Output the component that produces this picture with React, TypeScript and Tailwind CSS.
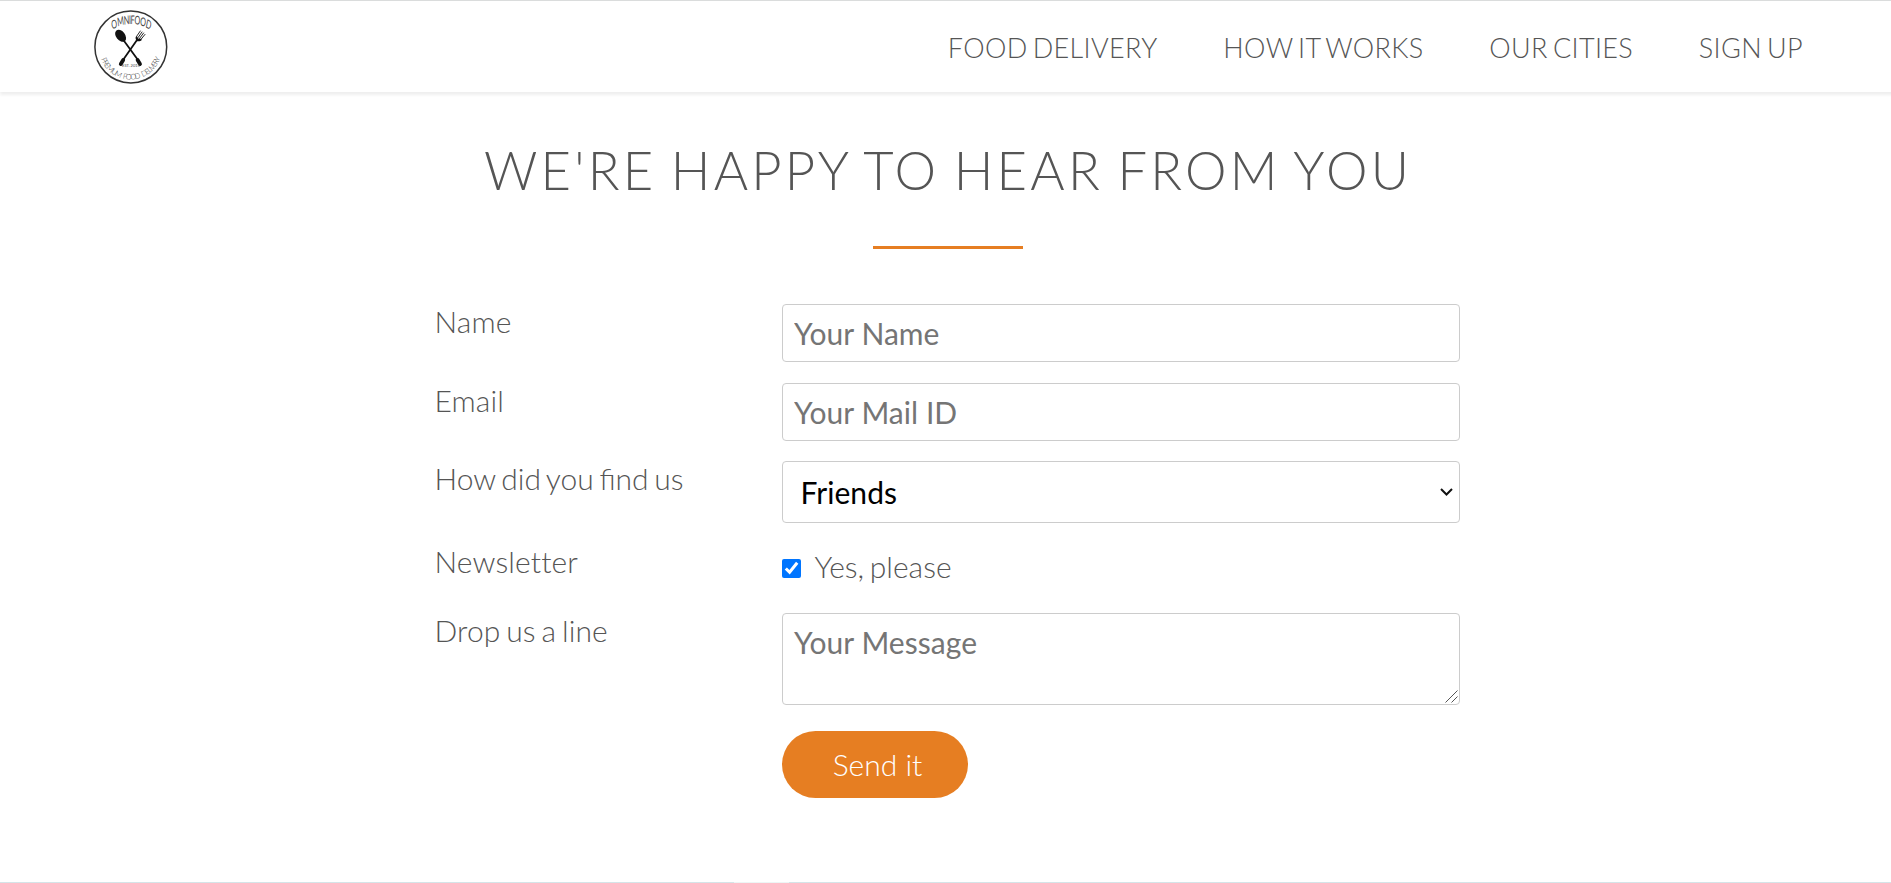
import React from "react";

const field =
  "block w-full rounded-[4px] border border-[#ccc] bg-white p-[10.5px] pl-[11.5px] text-[30px] leading-[36px] font-normal tracking-[0.05px] [word-spacing:0px] placeholder:text-[#757575] outline-none";

function Logo() {
  return (
    <svg viewBox="0 0 74 74" className="size-[74px] shrink-0" aria-hidden="true">
      <defs>
        <path id="arc-top" d="M 14 38 A 48 24 0 0 1 110 38" />
        <path id="arc-bottom" d="M 5 38 A 31.5 31.5 0 0 0 68 38" />
      </defs>
      <circle cx="36.8" cy="37" r="35.9" fill="#fff" stroke="#333" strokeWidth="1.5" />
      <g stroke="#111" strokeLinecap="round" fill="none">
        <path d="M29 29.5 L44 50" strokeWidth="1.8" />
        <path d="M43.6 50 L46 54" strokeWidth="3.8" />
        <path d="M43 30 L29 50" strokeWidth="1.8" />
        <path d="M29.2 50 L26.8 54" strokeWidth="3.8" />
        <path d="M42.5 26.5 L46.3 21 M44 27.6 L48 22 M45.4 28.6 L49.6 23 M46.6 29.8 L51 24.4" strokeWidth="0.9" />
        <path d="M42.6 27.5 Q42 31.5 46.6 29.8" strokeWidth="2" fill="#111" />
      </g>
      <ellipse cx="26.6" cy="25.8" rx="4.5" ry="6.8" transform="rotate(-38 26.6 25.8)" fill="#111" />
      <g fill="#444" fontFamily="Lato, sans-serif" fontWeight="400">
        <text transform="scale(0.6 1)" fontSize="12" letterSpacing="-0.6" textAnchor="middle">
          <textPath href="#arc-top" startOffset="50%">OMNIFOOD</textPath>
        </text>
        <text fontSize="7.6" letterSpacing="-1.1" wordSpacing="2" textAnchor="middle" fontWeight="300">
          <textPath href="#arc-bottom" startOffset="50%">PREMIUM FOOD DELIVERY</textPath>
        </text>
        <text x="37" y="56.5" fontSize="4" wordSpacing="0" textAnchor="middle">EST. 2015</text>
      </g>
    </svg>
  );
}

type RowProps = { label: string; className: string; labelClass?: string; children?: React.ReactNode };

function Row({ label, className, labelClass = "tracking-[0.12px]", children }: RowProps) {
  return (
    <div className={`grid grid-cols-[331px_678px] gap-x-[16px] ${className}`}>
      <label className={`-mt-px leading-[37px] ${labelClass}`}>{label}</label>
      <div>{children}</div>
    </div>
  );
}

export default function App() {
  return (
    <div className="h-[883px] w-full overflow-hidden bg-white font-['Lato',sans-serif] text-[30px] font-light text-[#555] [word-spacing:-2.5px]">
      <div className="flex h-full w-[1896px] flex-col">
        <header className="flex h-[92px] w-full shrink-0 items-center justify-between border-t border-[#dadcdc] pt-[1px] pr-[93px] pl-[93.5px] shadow-[0_3px_3px_#efefef]">
          <Logo />
          <nav className="flex gap-[65.7px] pt-[3px] text-[27px] tracking-[0.35px]">
            <a>FOOD DELIVERY</a>
            <a>HOW IT WORKS</a>
            <a>OUR CITIES</a>
            <a>SIGN UP</a>
          </nav>
        </header>
        <main className="flex flex-col items-center pt-[46px]">
          <h2 className="text-[52.5px] leading-[64px] tracking-[3.2px] whitespace-nowrap [word-spacing:-3px]">
            WE'RE HAPPY TO HEAR FROM YOU
          </h2>
          <div className="mt-[44px] h-[3px] w-[150px] bg-[#e67e22]" />
          <form className="mt-[55px] pr-[2px]">
            <Row label="Name" className="h-[79px]">
              <input className={`${field} h-[58px]`} placeholder="Your Name" />
            </Row>
            <Row label="Email" className="h-[78px]">
              <input className={`${field} h-[58px]`} placeholder="Your Mail ID" />
            </Row>
            <Row label="How did you find us" className="h-[83px]" labelClass="tracking-normal">
              <div className="relative">
                <select className={`${field} h-[62px] appearance-none pl-[18px] text-black`}>
                  <option>Friends</option>
                </select>
                <svg viewBox="0 0 13 8" className="pointer-events-none absolute top-[27px] right-[7px] h-[8px] w-[13px]">
                  <path d="M1 1 L6.5 6.5 L12 1" fill="none" stroke="#111" strokeWidth="2" />
                </svg>
              </div>
            </Row>
            <Row label="Newsletter" className="h-[69px]">
              <div className="flex items-center gap-[14px] pt-[4px] leading-[37px]">
                <input type="checkbox" defaultChecked className="mt-[3px] size-[19px]" />
                Yes, please
              </div>
            </Row>
            <Row label="Drop us a line" className="h-[118px]">
              <div className="relative">
                <textarea className={`${field} h-[92px] resize-none pt-[9.5px]`} placeholder="Your Message" />
                <svg viewBox="0 0 13 13" className="pointer-events-none absolute right-[2px] bottom-[2px] size-[13px]">
                  <path d="M0.5 12.5 L12.5 0.5 M6.5 12.5 L12.5 6.5" fill="none" stroke="#555" strokeWidth="1" />
                </svg>
              </div>
            </Row>
            <Row label="" className="h-[67px]">
              <button type="button" className="h-[67px] w-[186px] rounded-full bg-[#e67e22] pl-[6px] font-light text-white">
                Send it
              </button>
            </Row>
          </form>
        </main>
        <div className="mt-auto flex h-px w-full bg-[#d5e4e8]">
          <div className="ml-[734px] w-[55px] bg-[#edf5f5]" />
        </div>
      </div>
    </div>
  );
}
